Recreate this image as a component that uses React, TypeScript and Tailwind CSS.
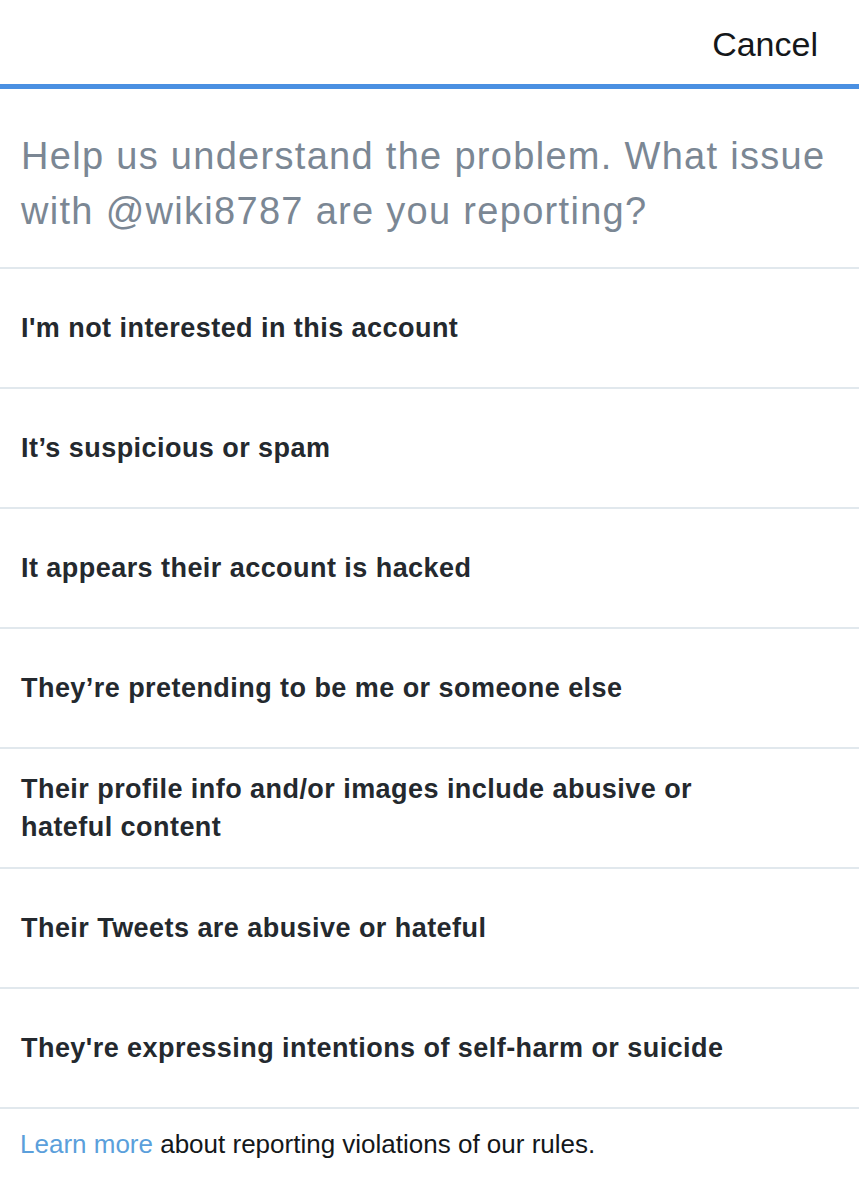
const reasons = [
  "I'm not interested in this account",
  "It’s suspicious or spam",
  "It appears their account is hacked",
  "They’re pretending to be me or someone else",
  "Their profile info and/or images include abusive or hateful content",
  "Their Tweets are abusive or hateful",
  "They're expressing intentions of self-harm or suicide",
];

export default function App() {
  return (
    <div className="w-[859px] h-[1200px] bg-white font-['Liberation_Sans',Arial,sans-serif] overflow-hidden">
      {/* top bar */}
      <div className="h-[84px] flex items-center justify-end pr-[41px] pt-[4px]">
        <button className="text-[34px] text-[#14171a] leading-none">Cancel</button>
      </div>
      <div className="h-[5px] bg-[#4a90e2]" />

      <div className="h-[180px] border-b-2 border-[#e1e8ed] px-[21px] pt-[40px]">
        <h1 className="text-[38px] leading-[55px] tracking-[1.3px] text-[#7b8794] font-normal">
          Help us understand the problem. What issue<br />
          with @wiki8787 are you reporting?
        </h1>
      </div>

      <div>
        {reasons.map(r => (
          <div key={r} className="h-[120px] border-b-2 border-[#e1e8ed] flex items-center pl-[21px] pr-[120px]">
            <span className="text-[27px] leading-[38px] tracking-[0.45px] font-bold text-[#24292e]">{r}</span>
          </div>
        ))}
      </div>

      <p className="px-[20px] pt-[16px] text-[26px] text-[#14171a]">
        <a href="#" className="text-[#5b9fdb]">Learn more</a> about reporting violations of our rules.
      </p>
    </div>
  );
}
